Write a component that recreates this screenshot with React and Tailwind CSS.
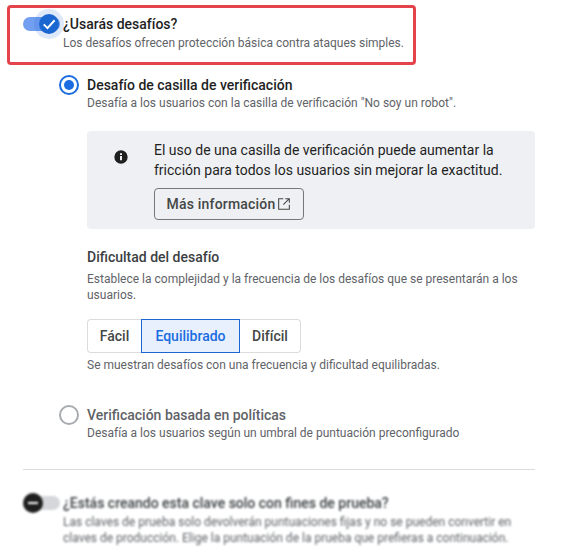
import React from 'react';

const Radio = ({ checked }) => (
  <span
    className={`flex h-5 w-5 shrink-0 items-center justify-center rounded-full border-2 ${
      checked ? 'border-[#1a6ce0]' : 'border-[#a8abb0]'
    }`}
  >
    {checked && <span className="h-2.5 w-2.5 rounded-full bg-[#1a6ce0]" />}
  </span>
);

const App = () => {
  return (
    <div className="h-[559px] w-[566px] overflow-hidden bg-white font-['Roboto',sans-serif] text-[#1f1f1f]">
      {/* Highlighted toggle row */}
      <div className="ml-[7px] mt-[5px] flex h-[60px] w-[409px] rounded-[4px] border-[3px] border-[#e5434b] pl-[13px] pt-[9px]">
        <div className="relative h-[14px] w-[37px] shrink-0 rounded-full bg-[#739ff0]">
          <div className="absolute left-[11px] top-[-8px] h-[30px] w-[30px] rounded-full bg-[#1a67d2]/15" />
          <div className="absolute left-[16px] top-[-3px] flex h-5 w-5 items-center justify-center rounded-full bg-[#1a67d2]">
            <svg viewBox="0 0 24 24" className="h-[18px] w-[18px]" fill="none" stroke="white" strokeWidth="2.6">
              <path d="M5 12.5l5 5L19.5 7" />
            </svg>
          </div>
        </div>
        <div className="relative ml-[3px] mt-[-3px]">
          <h2 className="text-[14px] leading-5 font-medium">¿Usarás desafíos?</h2>
          <p className="mt-[1px] text-[12px] leading-4 text-[#5f6368]">
            Los desafíos ofrecen protección básica contra ataques simples.
          </p>
        </div>
      </div>

      {/* Challenge options */}
      <div className="ml-[59px] mt-[10px] w-[476px]">
        <div className="flex gap-[8px]">
          <Radio checked />
          <div>
            <h3 className="text-[14px] leading-5 font-medium">Desafío de casilla de verificación</h3>
            <p className="text-[12px] leading-4 text-[#5f6368]">
              Desafía a los usuarios con la casilla de verificación "No soy un robot".
            </p>
          </div>
        </div>

        <div className="ml-[28px] mt-[20px] flex h-[98px] w-[448px] rounded-[4px] bg-[#eef0f3] pt-[9px]">
          <svg viewBox="0 0 24 24" className="ml-[26px] mt-[9px] h-[16px] w-[16px] shrink-0" fill="#1f1f1f">
            <path d="M12 2a10 10 0 1 0 0 20 10 10 0 0 0 0-20zm1.500 15h-3v-6.500h3V17zm0-8h-3V6.500h3V9z" />
          </svg>
          <div className="ml-[25px]">
            <p className="text-[14px] leading-5 text-[#1f1f1f]">
              El uso de una casilla de verificación puede aumentar la
              <br />
              fricción para todos los usuarios sin mejorar la exactitud.
            </p>
            <button className="mt-[8px] flex h-[32px] w-[150px] items-center justify-center rounded-[4px] border border-[#74777c] text-[14px] font-medium tracking-[0.2px] text-[#444746]">
              Más información
              <svg viewBox="0 0 24 24" className="h-[16px] w-[16px]" fill="none" stroke="#444746" strokeWidth="1.600">
                <path d="M11 4H4v16h16v-7M14 4h6v6M20 4l-9 9" />
              </svg>
            </button>
          </div>
        </div>

        <div className="ml-[28px] mt-[18px] w-[448px]">
          <h3 className="text-[14px] leading-5 font-medium text-[#3c4043]">Dificultad del desafío</h3>
          <p className="mt-[4px] text-[12px] leading-4 text-[#5f6368]">
            Establece la complejidad y la frecuencia de los desafíos que se presentarán a los usuarios.
          </p>
          <div className="mt-[16px] flex h-[34px] w-[214px] text-[14px] font-medium">
            <div className="flex w-[54px] items-center justify-center rounded-l-[4px] border border-r-0 border-[#dadce0] text-[#444746]">
              Fácil
            </div>
            <div className="flex w-[99px] items-center justify-center border border-[#1a67d2] bg-[#e8f0fe] text-[#1a6ce0]">
              Equilibrado
            </div>
            <div className="flex w-[61px] items-center justify-center rounded-r-[4px] border border-l-0 border-[#dadce0] text-[#444746]">
              Difícil
            </div>
          </div>
          <p className="mt-[4px] text-[12px] leading-4 text-[#5f6368]">
            Se muestran desafíos con una frecuencia y dificultad equilibradas.
          </p>
        </div>

        <div className="mt-[32px] flex gap-[8px]">
          <Radio />
          <div>
            <h3 className="text-[14px] leading-5 font-medium text-[#5f6368]">Verificación basada en políticas</h3>
            <p className="text-[12px] leading-4 text-[#5f6368]">
              Desafía a los usuarios según un umbral de puntuación preconfigurado
            </p>
          </div>
        </div>
      </div>

      <div className="ml-[23px] mt-[28px] h-px w-[512px] bg-[#dadce0]" />

      {/* Blurred test key row */}
      <div className="ml-[23px] mt-[23px] flex w-[512px] blur-[1px]">
        <div className="relative mt-[3px] h-[14px] w-[37px] shrink-0 rounded-full bg-[#d5d7db]">
          <div className="absolute left-0 top-[-3px] flex h-5 w-5 items-center justify-center rounded-full bg-[#1f1f1f]">
            <div className="h-[2px] w-[10px] bg-white" />
          </div>
        </div>
        <div className="ml-[3px]">
          <h2 className="text-[14px] leading-5 font-medium text-[#3c4043]">
            ¿Estás creando esta clave solo con fines de prueba?
          </h2>
          <p className="mt-[1px] text-[12px] leading-4 text-[#5f6368]">
            Las claves de prueba solo devolverán puntuaciones fijas y no se pueden convertir en claves de producción. Elige la puntuación de la prueba que prefieras a continuación.
          </p>
        </div>
      </div>
    </div>
  );
};

export default App;
